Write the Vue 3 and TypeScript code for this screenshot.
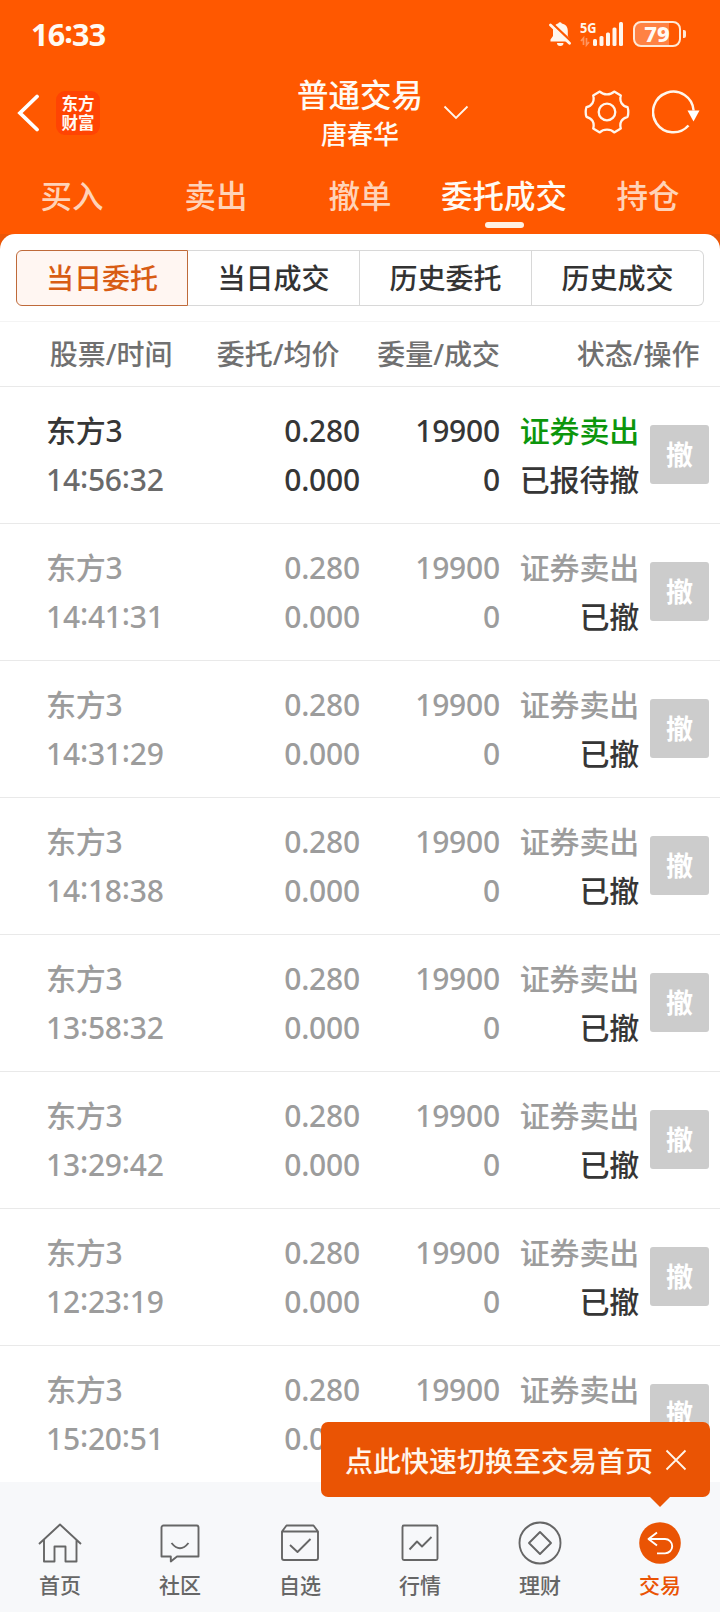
<script setup lang="ts">
interface Order {
  time: string
  status: string
  active: boolean
}

const tabs: string[] = ['买入', '卖出', '撤单', '委托成交', '持仓']
const activeTab = '委托成交'
const segments: string[] = ['当日委托', '当日成交', '历史委托', '历史成交']
const columns: string[] = ['股票/时间', '委托/均价', '委量/成交', '状态/操作']

const orders: Order[] = [
  { time: '14:56:32', status: '已报待撤', active: true },
  { time: '14:41:31', status: '已撤', active: false },
  { time: '14:31:29', status: '已撤', active: false },
  { time: '14:18:38', status: '已撤', active: false },
  { time: '13:58:32', status: '已撤', active: false },
  { time: '13:29:42', status: '已撤', active: false },
  { time: '12:23:19', status: '已撤', active: false },
  { time: '15:20:51', status: '已撤', active: false },
]

const navItems = [
  { key: 'home', label: '首页' },
  { key: 'community', label: '社区' },
  { key: 'watch', label: '自选' },
  { key: 'market', label: '行情' },
  { key: 'wealth', label: '理财' },
  { key: 'trade', label: '交易' },
]
</script>

<template>
  <div class="app">
    <header class="top">
      <div class="statusbar">
        <div class="clock">16<i class="colon">:</i>33</div>
        <svg class="bell" width="22" height="26" viewBox="0 0 22 26">
          <path d="M1.500 20.500V18.500L4 15V10C4 5.600 6.600 3.100 9.200 2.500A2 2 0 0 1 12.800 2.500C17 3.300 18.800 6.200 18.800 10V15L20.500 18V20.500Z" fill="#fff6ec" />
          <path d="M8 22H14.500A3.200 3 0 0 1 8 22Z" fill="#fff6ec" />
          <path d="M1 .6 22 20.200" stroke="#ff5800" stroke-width="2.600" />
          <path d="M1.500 4 20.500 22.300" stroke="#fff6ec" stroke-width="2.800" stroke-linecap="round" />
        </svg>
        <svg class="signal" width="44" height="34" viewBox="0 -4 44 34">
          <text x="0" y="12" class="net" textLength="16.500" lengthAdjust="spacingAndGlyphs">5G</text>
          <path d="M3.500 24V17L1 20M6.500 17V24L9 21" fill="none" stroke="#ff9560" stroke-width="1.700" />
          <g fill="#fff6ec">
            <rect x="13" y="18" width="4" height="7" rx="1.500" />
            <rect x="19.500" y="15" width="4" height="10" rx="1.500" />
            <rect x="26" y="11.500" width="4" height="13.500" rx="1.500" />
            <rect x="32.500" y="6.500" width="4" height="18.500" rx="1.500" />
            <rect x="39" y="1" width="4" height="24" rx="1.500" />
          </g>
        </svg>
        <div class="battery"><span class="level">79</span></div>
        <span class="nub"></span>
      </div>

      <div class="titlebar">
        <div class="lead">
          <svg class="back" width="24" height="38" viewBox="0 0 24 38">
            <path d="M21 2.500 4 19 21 35.500" fill="none" stroke="#fff" stroke-width="3.800" stroke-linecap="round" />
          </svg>
          <div class="brand"><span>东方</span><span>财富</span></div>
        </div>
        <div class="heading">
          <div class="title">普通交易</div>
          <div class="user">唐春华</div>
        </div>
        <div class="tools">
          <svg class="chev" width="26" height="15" viewBox="0 0 26 15">
            <path d="M1.500 1.500 13 13 24.500 1.500" fill="none" stroke="#fff6ec" stroke-width="1.800" />
          </svg>
          <svg class="gear" width="46" height="46" viewBox="0 0 46 46" fill="none" stroke="#fff6ec" stroke-width="2.300" stroke-linejoin="round">
            <path d="M15.800 2.600C19.500 6.300 26.500 6.300 30.200 2.600L36.800 6.500C35.200 12.500 38 16.800 43.600 18.200Q45 23 43.600 27.800C38 29.200 35.200 33.500 36.800 39.500L30.200 43.400C26.500 39.700 19.500 39.700 15.800 43.400L9.200 39.500C10.800 33.500 8 29.200 2.400 27.800Q1 23 2.400 18.200C8 16.800 10.800 12.500 9.200 6.500Z" />
            <circle cx="23" cy="23" r="8.300" />
          </svg>
          <svg class="reload" width="48" height="46" viewBox="0 0 48 46">
            <path d="M36.500 36.500A20.300 20.300 0 1 1 41.600 21.500" fill="none" stroke="#fff6ec" stroke-width="2.500" />
            <path d="M35.500 21.500H47.500L41.500 32.500Z" fill="#fff" />
          </svg>
        </div>
      </div>

      <nav class="tabs">
        <div v-for="t in tabs" :key="t" class="tab" :class="{ on: t === activeTab }">{{ t }}</div>
      </nav>
    </header>

    <main class="sheet-wrap">
      <div class="sheet">
        <div class="segments">
          <div v-for="(s, i) in segments" :key="s" class="seg" :class="{ on: i === 0 }">{{ s }}</div>
        </div>
        <div class="cols">
          <span v-for="c in columns" :key="c">{{ c }}</span>
        </div>
        <div v-for="o in orders" :key="o.time" class="row" :class="{ live: o.active }">
          <div class="cell name">
            <span>东方3</span>
            <span class="time"><template v-for="(p, i) in o.time.split(':')" :key="i"><i v-if="i > 0" class="colon">:</i>{{ p }}</template></span>
          </div>
          <div class="cell"><span>0.280</span><span>0.000</span></div>
          <div class="cell"><span>19900</span><span>0</span></div>
          <div class="cell"><span class="side">证券卖出</span><span class="state">{{ o.status }}</span></div>
          <div class="cancel">撤</div>
        </div>
      </div>
    </main>

    <footer class="bottom">
      <div v-for="n in navItems" :key="n.key" class="item" :class="{ on: n.key === 'trade' }">
        <svg width="44" height="44" viewBox="0 0 44 44" fill="none" stroke="#666" stroke-width="1.900" stroke-linejoin="round">
          <g v-if="n.key === 'home'">
            <path d="M1 23 22 3.500 43 23M6 18.500V40.500H16.500V25.500H27.500V40.500H38.500V18.500" />
          </g>
          <g v-else-if="n.key === 'community'">
            <path d="M5.500 4.500H38.500A2 2 0 0 1 40.500 6.500V35.500H19L12.800 40.500V35.500H3.500V6.500A2 2 0 0 1 5.500 4.500Z" />
            <path d="M13.500 22Q22 32.500 30.500 22" />
          </g>
          <g v-else-if="n.key === 'watch'">
            <path d="M4 10.500 8.500 4.500H35.500L40 10.500V37A2 2 0 0 1 38 39H6A2 2 0 0 1 4 37ZM4 10.500H40" />
            <path d="M12 24 19.500 31 32.500 18" />
          </g>
          <g v-else-if="n.key === 'market'">
            <rect x="4.500" y="4.500" width="35" height="34.500" rx="1.500" />
            <path d="M11.500 28.500 19 20.500 24 25.500 33.500 16" />
          </g>
          <g v-else-if="n.key === 'wealth'">
            <circle cx="22" cy="22" r="20.500" />
            <path d="M22 11 33 22 22 33 11 22Z" />
          </g>
          <g v-else>
            <circle cx="22" cy="22" r="20.800" fill="#ea5404" stroke="none" />
            <path d="M19 11.500 10.500 18 19 24.500M10.500 18H27A7.200 7.200 0 0 1 27 32.400H19" stroke="#fff" />
          </g>
        </svg>
        <span>{{ n.label }}</span>
      </div>
      <div class="tip">
        <span>点此快速切换至交易首页</span>
        <svg width="22" height="22" viewBox="0 0 22 22">
          <path d="M1.500 1.500 20.500 20.500M20.500 1.500 1.500 20.500" stroke="#fff6ec" stroke-width="1.800" />
        </svg>
      </div>
    </footer>
  </div>
</template>

<style>
body {
  margin: 0;
  background: #fff;
}
</style>

<style scoped>
.app {
  width: 720px;
  height: 1612px;
  display: flex;
  flex-direction: column;
  overflow: hidden;
  box-sizing: border-box;
  font-family: 'Noto Sans', 'Noto Sans CJK SC', sans-serif;
  color: #333;
  white-space: nowrap;
}
.colon {
  font-style: normal;
  display: inline-block;
  line-height: 1;
  vertical-align: 3px;
}
.top {
  height: 234px;
  background: #ff5800;
  color: #fffaf3;
  flex: none;
}
.statusbar {
  height: 68px;
  display: flex;
  align-items: center;
  padding: 0 35px 0 31px;
}
.clock {
  flex: 1;
  font-size: 30.500px;
  font-weight: 700;
  line-height: 67px;
  letter-spacing: -0.8px;
}
.bell {
  margin-right: 9px;
}
.signal {
  margin-right: 9px;
}
.net {
  font: 700 14.500px 'Noto Sans', sans-serif;
  fill: #fff6ec;
}
.battery {
  width: 48px;
  height: 26px;
  box-sizing: border-box;
  border: 2px solid #ffe9d6;
  border-radius: 8px;
  background: linear-gradient(90deg, #ff8243 0 34px, #ff5800 34px);
}
.level {
  display: block;
  text-align: center;
  font-size: 22px;
  line-height: 21px;
  font-weight: 800;
}
.nub {
  width: 3px;
  height: 8px;
  margin-left: 2px;
  margin-right: -1px;
  border-radius: 0 2px 2px 0;
  background: #ffe9d6;
}
.titlebar {
  height: 88px;
  display: grid;
  grid-template-columns: 1fr 128px 1fr;
  align-items: center;
}
.lead {
  display: flex;
  align-items: center;
  padding-left: 16px;
  gap: 16px;
  padding-top: 2px;
}
.brand {
  width: 44px;
  height: 44px;
  border-radius: 9px;
  background: #ff4403;
  display: flex;
  flex-direction: column;
  align-items: center;
  justify-content: center;
  font-family: 'Noto Sans CJK SC', sans-serif;
  font-size: 16.500px;
  line-height: 19.500px;
  font-weight: 700;
}
.heading {
  text-align: center;
  padding-top: 2px;
}
.title {
  font-size: 31.500px;
  line-height: 42px;
  font-weight: 500;
}
.user {
  font-size: 26px;
  line-height: 36px;
  font-weight: 500;
}
.tools {
  display: flex;
  align-items: center;
  padding-left: 19px;
}
.gear {
  margin-left: 115px;
}
.reload {
  margin-left: 22px;
}
.tabs {
  height: 78px;
  display: grid;
  grid-template-columns: repeat(5, 144px);
  font-size: 31.500px;
}
.tab {
  display: flex;
  flex-direction: column;
  align-items: center;
  line-height: 80px;
  color: #ffd3b8;
  font-weight: 500;
  height: 78px;
}
.tab.on {
  color: #fffaf3;
}
.tab.on::after {
  content: '';
  width: 39px;
  height: 5.500px;
  border-radius: 3px;
  background: #fff1e4;
  margin-top: -14px;
}
.sheet-wrap {
  height: 1248px;
  flex: none;
  background: linear-gradient(#eb5606 0 20px, #fff 20px);
}
.sheet {
  background: #fff;
  border-radius: 15px 15px 0 0;
  height: 100%;
}
.segments {
  display: grid;
  grid-template-columns: repeat(4, 172px);
  padding: 16px 16px 15px;
  border-bottom: 1px solid #f4f4f4;
}
.seg {
  height: 56px;
  box-sizing: border-box;
  border: 1px solid #d8d8d8;
  border-left-width: 0;
  text-align: center;
  line-height: 55px;
  font-size: 28px;
  font-weight: 500;
}
.seg.on {
  border: 1px solid #bf6a3a;
  border-radius: 6px 0 0 6px;
  background: #fff6f2;
  color: #d85c14;
}
.seg:last-child {
  border-radius: 0 6px 6px 0;
}
.cols {
  height: 64px;
  border-bottom: 1px solid #e9e9e9;
  display: grid;
  grid-template-columns: 172.500px 167px 160.500px 199.500px;
  text-align: right;
  line-height: 65px;
  font-size: 28px;
  font-weight: 500;
  color: #707070;
}
.row {
  height: 137px;
  box-sizing: border-box;
  border-bottom: 1px solid #e9e9e9;
  display: grid;
  grid-template-columns: 200px 114px 140px 139px 71px;
  padding: 19px 0 0 46px;
  color: #9c9c9c;
  font-size: 30px;
  font-weight: 500;
  letter-spacing: -0.2px;
}
.row:last-child {
  border-bottom: 0;
}
.cell {
  display: flex;
  flex-direction: column;
  align-items: flex-end;
  line-height: 49px;
}
.cell.name {
  align-items: flex-start;
}
.row.live,
.state {
  color: #363636;
}
.row.live .time {
  color: #6a6a6a;
}
.row.live .side {
  color: #0c960c;
}
.cancel {
  justify-self: end;
  margin-top: 19px;
  margin-right: 1px;
  width: 59px;
  height: 59px;
  border-radius: 3px;
  background: #ccc;
  color: #fff;
  font-size: 27px;
  font-weight: 700;
  line-height: 60px;
  text-align: center;
}
.bottom {
  position: relative;
  flex: 1;
  background: #f7f8fa;
  display: grid;
  grid-template-columns: repeat(6, 120px);
}
.item {
  display: flex;
  flex-direction: column;
  align-items: center;
  padding-top: 39px;
  font-size: 21px;
  font-weight: 500;
  line-height: 30px;
  color: #666;
  gap: 5px;
}
.item svg {
  display: block;
}
.item.on {
  color: #ea5404;
}
.tip {
  position: absolute;
  right: 10px;
  top: -60px;
  width: 389px;
  height: 75px;
  box-sizing: border-box;
  padding: 0 23px 0 24px;
  border-radius: 7px;
  background: #ea5404;
  color: #fff6ec;
  font-size: 28px;
  font-weight: 500;
  display: flex;
  align-items: center;
  justify-content: space-between;
}
.tip::after {
  content: '';
  position: absolute;
  right: 40px;
  top: 75px;
  border: 10px solid transparent;
  border-top-color: #ea5404;
  border-bottom: 0;
}
</style>
